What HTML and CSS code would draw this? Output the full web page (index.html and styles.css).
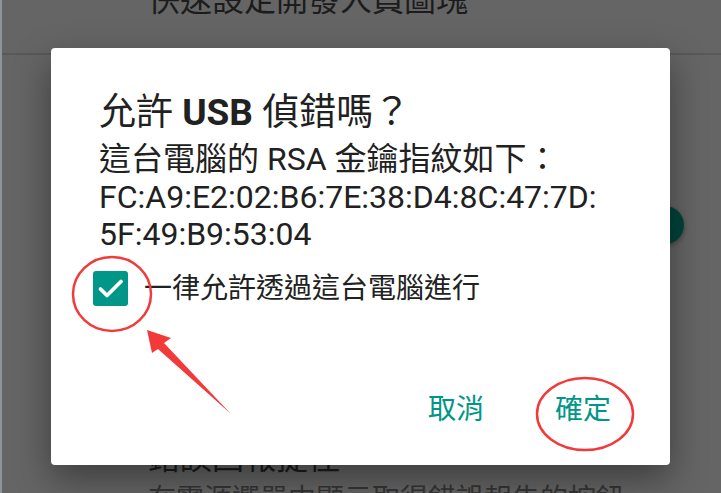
FILE: index.html
```html
<!DOCTYPE html>
<html>
<head>
    <title>允許 USB 偵錯</title>
    <link rel="stylesheet" href="styles.css">
</head>
<body>
    <div class="screen">
        <div class="list">
            <div class="item-title top-title">快速設定開發人員圖塊</div>
            <div class="divider"></div>
            <div class="row-mid">
                <div class="thumb-on"></div>
            </div>
            <div class="row-bottom">
                <div class="row-text">
                    <div class="item-title">錯誤回報捷徑</div>
                    <div class="item-sub">在電源選單中顯示取得錯誤報告的按鈕</div>
                </div>
                <div class="toggle">
                    <div class="track"></div>
                    <div class="thumb-off"></div>
                </div>
            </div>
        </div>

        <div class="dialog">
            <div class="dialog-title">允許 <b>USB</b> 偵錯嗎？</div>
            <div class="dialog-body">這台電腦的 RSA 金鑰指紋如下：<br>FC:A9:E2:02:B6:7E:38:D4:8C:47:7D:<br>5F:49:B9:53:04</div>
            <label class="check-row">
                <span class="check-box">
                    <svg width="35" height="35" viewBox="0 0 35 35">
                        <path d="M7.5 18 L14 24.5 L28 10.5" fill="none" stroke="#fff" stroke-width="3.8" stroke-linecap="round" stroke-linejoin="round"/>
                    </svg>
                </span>
                <span class="check-label">一律允許透過這台電腦進行</span>
            </label>
            <div class="actions">
                <button type="button" class="btn">取消</button>
                <button type="button" class="btn">確定</button>
            </div>
        </div>

        <!-- red annotation marks -->
        <svg class="marks" width="721" height="493" viewBox="0 0 721 493">
            <ellipse cx="112" cy="294" rx="39" ry="37" fill="none" stroke="#f23a3a" stroke-width="2.5"/>
            <ellipse cx="585" cy="414" rx="48" ry="36" fill="none" stroke="#f23a3a" stroke-width="2.5"/>
            <polygon points="147,330 171,338 164,343 231,414 158,349 152,353" fill="#f23a3a"/>
        </svg>
    </div>
</body>
</html>
```

FILE: styles.css
```css
* {
    box-sizing: border-box;
}

body {
    margin: 0;
    font-family: Roboto, "Noto Sans CJK TC", sans-serif;
    background: #656565;
}

.screen {
    position: relative;
    width: 721px;
    height: 493px;
    overflow: hidden;
    background: #656565;
    border-left: 2px solid #8e949e;
}

.list {
    display: flex;
    flex-direction: column;
    margin-top: -22px;
}

.item-title {
    padding-left: 146px;
    font-size: 32px;
    line-height: 44px;
    height: 44px;
    color: #1c1c1c;
}

.divider {
    height: 2px;
    margin-top: 31px;
    background: #585858;
}

.row-mid {
    display: flex;
    justify-content: flex-end;
    align-items: center;
    height: 340px;
}

.thumb-on {
    width: 38px;
    height: 38px;
    margin-right: 37px;
    border-radius: 50%;
    background: #00443a;
    box-shadow: 0 2px 5px rgba(0, 0, 0, 0.35);
}

.row-bottom {
    display: flex;
    padding-top: 41px;
}

.row-text {
    flex: 1;
}

.item-sub {
    margin-top: 2px;
    padding-left: 146px;
    font-size: 28px;
    line-height: 36px;
    color: #353535;
    white-space: nowrap;
}

.toggle {
    position: relative;
    width: 70px;
    height: 44px;
    margin-top: 78px;
    margin-right: 51px;
    flex-shrink: 0;
}

.track {
    position: absolute;
    left: 0;
    top: 7px;
    width: 68px;
    height: 30px;
    border-radius: 15px;
    background: #474747;
}

.thumb-off {
    position: absolute;
    left: 2px;
    top: 0;
    width: 44px;
    height: 44px;
    border-radius: 50%;
    background: #575757;
    box-shadow: 0 1px 4px rgba(0, 0, 0, 0.3);
}

.dialog {
    position: absolute;
    left: 49px;
    top: 48px;
    width: 619px;
    height: 417px;
    display: flex;
    flex-direction: column;
    padding: 43px 43px 27px 48px;
    background: #fff;
    border-radius: 4px;
    box-shadow: 0 14px 36px rgba(0, 0, 0, 0.4);
}

.dialog-title {
    font-size: 37px;
    line-height: 44px;
    color: #212121;
}

.dialog-title b {
    font-weight: 700;
}

.dialog-body {
    margin-top: 6px;
    font-size: 32px;
    line-height: 37.5px;
    color: #212121;
}

.check-row {
    display: flex;
    align-items: center;
    margin-top: 17px;
    margin-left: -6px;
}

.check-box {
    width: 35px;
    height: 35px;
    border-radius: 3px;
    background: #009688;
}

.check-box svg {
    display: block;
}

.check-label {
    margin-left: 16px;
    font-size: 28px;
    line-height: 36px;
    color: #212121;
}

.actions {
    display: flex;
    justify-content: flex-end;
    gap: 39px;
    margin-top: auto;
}

.btn {
    padding: 14px 16px;
    border: none;
    background: none;
    font-family: Roboto, "Noto Sans CJK TC", sans-serif;
    font-size: 28px;
    line-height: 28px;
    color: #009688;
}

.marks {
    position: absolute;
    left: -2px;
    top: 0;
    pointer-events: none;
}
```
